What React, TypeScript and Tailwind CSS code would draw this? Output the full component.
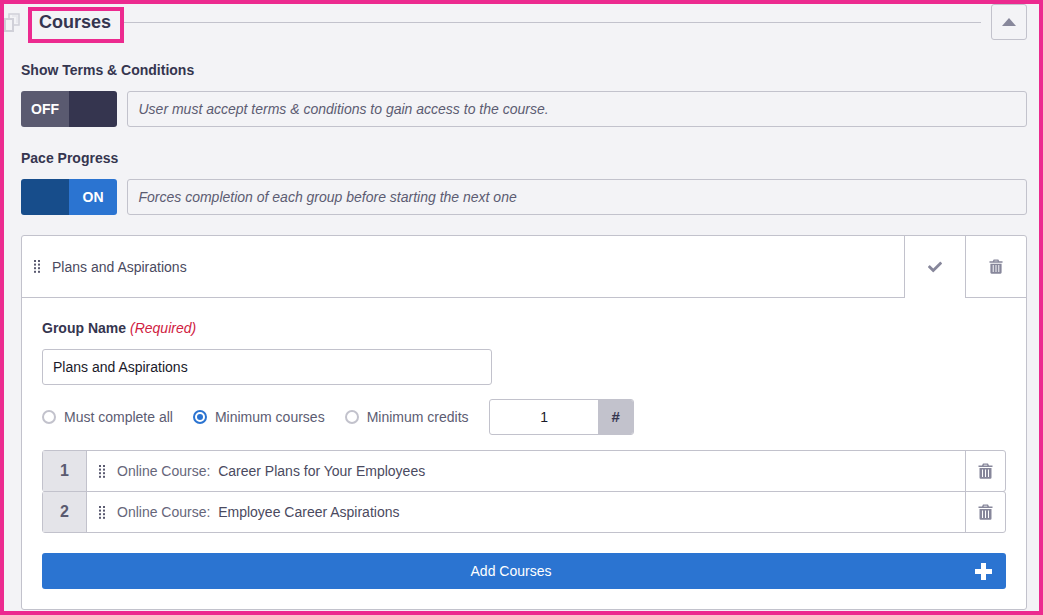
import { FaCheck } from 'react-icons/fa';

const inputBorder = 'border border-[#c2c2cc]';

function TrashIcon({ className }: { className: string }) {
  return (
    <svg viewBox="0 0 15 16" className={className} fill="currentColor">
      <path d="M5 0.5h5l1 2h3.500v1.500h-14v-1.500h3.500zM6 1.800l-.4.700h3.800l-.4-.700z" />
      <path fillRule="evenodd" d="M1.500 5h12v9.500a1.200 1.200 0 0 1-1.200 1.200h-9.600a1.200 1.200 0 0 1-1.200-1.200zM4 6.500v7.500h1v-7.500zM7 6.500v7.500h1v-7.500zM10 6.500v7.500h1v-7.500z" />
    </svg>
  );
}

function GripIcon() {
  return (
    <svg viewBox="0 0 6 13" className="w-1.5 h-[13px] text-[#5a5a70]" fill="currentColor">
      {[0, 3.6, 7.2, 10.8].map((y) => (
        <g key={y}>
          <rect x="0" y={y} width="2" height="2" />
          <rect x="4" y={y} width="2" height="2" />
        </g>
      ))}
    </svg>
  );
}

function Toggle({ on }: { on: boolean }) {
  return (
    <div className="flex w-24 h-9 shrink-0 rounded-[3px] overflow-hidden text-sm font-bold text-white">
      {on ? (
        <>
          <div className="w-12 bg-[#174d8b]" />
          <div className="w-12 flex items-center justify-center bg-[#2b74d1]">ON</div>
        </>
      ) : (
        <>
          <div className="w-12 flex items-center justify-center bg-[#5a5a70]">OFF</div>
          <div className="w-12 bg-[#35354f]" />
        </>
      )}
    </div>
  );
}

function Setting({ label, on, desc }: { label: string; on: boolean; desc: string }) {
  return (
    <div>
      <div className="h-[21px] flex items-center text-sm font-bold text-[#35354f]">{label}</div>
      <div className="flex gap-2.5 mt-[11px]">
        <Toggle on={on} />
        <div className={`flex-1 h-9 flex items-center pl-[10.500px] pr-3 rounded-[3px] bg-[#f3f3f6] text-sm italic text-[#5c5c72] ${inputBorder}`}>
          {desc}
        </div>
      </div>
    </div>
  );
}

function Radio({ label, checked }: { label: string; checked?: boolean }) {
  return (
    <label className="flex items-center gap-[8px] text-sm text-[#5c5c72]">
      <span
        className={`w-3.5 h-3.5 rounded-full flex items-center justify-center bg-white border-2 ${
          checked ? 'border-[#2b74d1]' : 'border-[#c2c2cc]'
        }`}
      >
        {checked && <span className="w-1.5 h-1.5 rounded-full bg-[#2b74d1]" />}
      </span>
      {label}
    </label>
  );
}

function CourseRow({ num, title, first }: { num: number; title: string; first?: boolean }) {
  return (
    <div className={`flex border border-[#c2c2cc] rounded-[3px] h-[42px] ${first ? '' : '-mt-px'}`}>
      <div className="w-11 shrink-0 flex items-center justify-center bg-[#e4e4e9] border-r border-[#c2c2cc] text-base font-bold text-[#5a5a70]">
        {num}
      </div>
      <div className="flex-1 flex items-center pl-3 text-sm">
        <GripIcon />
        <span className="ml-3 text-[#66667a] whitespace-pre">Online Course:  </span>
        <span className="text-[#4a4a60]">{title}</span>
      </div>
      <div className="w-10 shrink-0 flex items-center justify-center border-l border-[#c2c2cc] text-[#87879b]">
        <TrashIcon className="w-[15px] h-4" />
      </div>
    </div>
  );
}

export default function App() {
  return (
    <div className="relative h-[615px] overflow-hidden border-4 border-[#ec2a8f] bg-[#f3f3f6] font-['Liberation_Sans',Arial,sans-serif] pl-[17px] pr-3">
      {/* ghost drag handle */}
      <svg viewBox="0 0 16 19" className="absolute left-0 top-[9px] w-4 h-[19px] text-[#d0d0d8]" fill="none" stroke="currentColor" strokeWidth="2">
        <path d="M5 1h10v11h-10z" strokeWidth="1.500" />
        <path d="M8 3h5v7" stroke="#e6e6eb" strokeWidth="1.500" />
        <path d="M1 6h8v12H1z" fill="#f3f3f6" />
      </svg>

      {/* Header */}
      <div className="flex items-center h-9">
        <h2 className="ml-[18px] w-[85px] text-lg font-bold text-[#35354f] leading-9">Courses</h2>
        <div className="flex-1 h-px bg-[#c2c2cc]" />
        <button className={`ml-2.5 w-9 h-9 flex items-center justify-center rounded-[3px] ${inputBorder}`}>
          <svg viewBox="0 0 14 8" className="w-3.5 h-2 text-[#87879b]" fill="currentColor">
            <path d="M7 0l7 8h-14z" />
          </svg>
        </button>
      </div>
      <div className="absolute left-6 top-[3px] w-24 h-9 border-4 border-[#ec2a8f]" />

      <div className="mt-[19px] flex flex-col gap-[20px]">
        <Setting label="Show Terms & Conditions" on={false} desc="User must accept terms & conditions to gain access to the course." />
        <Setting label="Pace Progress" on desc="Forces completion of each group before starting the next one" />
      </div>

      {/* Group card */}
      <div className="mt-5 h-[375px] rounded-[3px] bg-white border border-[#c2c2cc]">
        <div className="flex h-[62px]">
          <div className="flex-1 flex items-center pl-[12px] border-b border-r border-[#c2c2cc] text-sm text-[#4a4a60]">
            <GripIcon />
            <span className="ml-3">Plans and Aspirations</span>
          </div>
          <div className="w-[60px] flex items-center justify-center text-[#87879b]">
            <FaCheck className="w-3.5 h-3.5" />
          </div>
          <div className="w-[61px] flex items-center justify-center border-b border-l border-[#c2c2cc] text-[#87879b]">
            <TrashIcon className="w-[14px] h-[15px]" />
          </div>
        </div>

        <div className="px-5 pt-[19px]">
          <div className="h-[21px] flex items-center text-sm">
            <span className="font-bold text-[#35354f]">Group Name</span>
            <span className="ml-1 italic text-[#d0213f]">(Required)</span>
          </div>
          <input
            readOnly
            value="Plans and Aspirations"
            className={`block mt-[11px] w-[450px] h-9 px-2.5 rounded-[3px] bg-white text-sm text-[#1a1a2a] outline-none ${inputBorder}`}
          />

          <div className="flex items-center mt-[14px] h-9">
            <div className="flex items-center gap-5">
              <Radio label="Must complete all" />
              <Radio label="Minimum courses" checked />
              <Radio label="Minimum credits" />
            </div>
            <div className="ml-5 flex h-9 w-[145px] rounded-[3px] overflow-hidden border border-[#c2c2cc]">
              <div className="flex-1 pl-px flex items-center justify-center text-sm text-[#1a1a2a]">1</div>
              <div className="w-9 -my-px -mr-px flex items-center justify-center bg-[#c2c2cc] text-[15px] font-bold text-[#35354f]">#</div>
            </div>
          </div>

          <div className="mt-[15px]">
            <CourseRow first num={1} title="Career Plans for Your Employees" />
            <CourseRow num={2} title="Employee Career Aspirations" />
          </div>

          <button className="relative mt-5 w-full h-9 pr-[26px] rounded-[3px] bg-[#2b74d1] text-sm text-white flex items-center justify-center">
            Add Courses
            <svg viewBox="0 0 17 17" className="absolute right-[14px] top-[10px] w-[17px] h-[17px]" fill="currentColor">
              <path d="M6 0h5v6h6v5h-6v6H6v-6H0V6h6z" />
            </svg>
          </button>
        </div>
      </div>
    </div>
  );
}
